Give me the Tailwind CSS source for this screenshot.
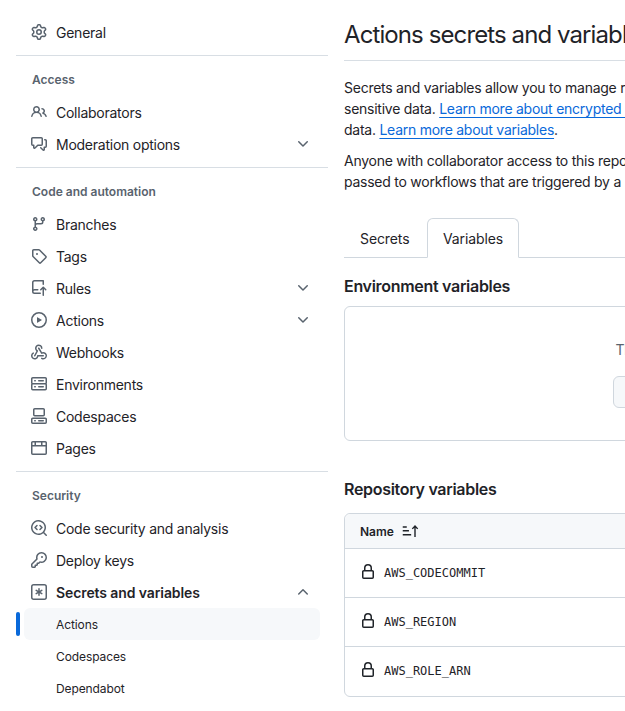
<!DOCTYPE html>
<html>
<head>
    <meta charset="UTF-8">
    <title>Actions secrets and variables</title>
    <script src="https://cdn.jsdelivr.net/npm/@tailwindcss/browser@4"></script>
</head>
<body class="bg-white overflow-hidden font-['Inter','Liberation_Sans',sans-serif] text-[14px] leading-[21px] tracking-[-0.25px] text-[#1f2328]">
<div class="flex w-[1300px] h-[711px] overflow-hidden">

    <!-- sidebar -->
    <nav class="w-[312px] mx-[16px] shrink-0 pt-[16px]">
        <a class="flex items-center h-[32px] pl-[15px]">
            <svg class="w-[16px] h-[16px] mr-[9px] fill-[#59636e]" viewBox="0 0 16 16"><path d="M8 0a8.2 8.2 0 0 1 .701.031C9.444.095 9.99.645 10.16 1.29l.288 1.107c.018.066.079.158.212.224.231.114.454.243.668.386.123.082.233.09.299.071l1.103-.303c.644-.176 1.392.021 1.82.63.27.385.506.792.704 1.218.315.675.111 1.422-.364 1.891l-.814.806c-.049.048-.098.147-.088.294.016.257.016.515 0 .772-.01.147.038.246.088.294l.814.806c.475.469.679 1.216.364 1.891a7.977 7.977 0 0 1-.704 1.217c-.428.61-1.176.807-1.82.63l-1.102-.302c-.067-.019-.177-.011-.3.071a5.909 5.909 0 0 1-.668.386c-.133.066-.194.158-.211.224l-.29 1.106c-.168.646-.715 1.196-1.458 1.26a8.006 8.006 0 0 1-1.402 0c-.743-.064-1.289-.614-1.458-1.26l-.289-1.106c-.018-.066-.079-.158-.212-.224a5.738 5.738 0 0 1-.668-.386c-.123-.082-.233-.09-.299-.071l-1.103.303c-.644.176-1.392-.021-1.82-.63a8.12 8.12 0 0 1-.704-1.218c-.315-.675-.111-1.422.363-1.891l.815-.806c.05-.048.098-.147.088-.294a6.214 6.214 0 0 1 0-.772c.01-.147-.038-.246-.088-.294l-.815-.806C.635 6.045.431 5.298.746 4.623a7.92 7.92 0 0 1 .704-1.217c.428-.61 1.176-.807 1.82-.63l1.102.302c.067.019.177.011.3-.071.214-.143.437-.272.668-.386.133-.066.194-.158.211-.224l.29-1.106C6.009.645 6.556.095 7.299.03 7.53.01 7.764 0 8 0Zm-.571 1.525c-.036.003-.108.036-.137.146l-.289 1.105c-.147.561-.549.967-.998 1.189-.173.086-.34.183-.5.29-.417.278-.97.423-1.529.27l-1.103-.303c-.109-.03-.175.016-.195.045-.22.312-.412.644-.573.99-.014.031-.021.11.059.19l.815.806c.411.406.562.957.53 1.456a4.709 4.709 0 0 0 0 .582c.032.499-.119 1.05-.53 1.456l-.815.806c-.081.08-.073.159-.059.19.162.346.353.677.573.989.02.03.085.076.195.046l1.102-.303c.56-.153 1.113-.008 1.53.27.161.107.328.204.501.29.447.222.85.629.997 1.189l.289 1.105c.029.109.101.143.137.146a6.6 6.6 0 0 0 1.142 0c.036-.003.108-.036.137-.146l.289-1.105c.147-.561.549-.967.998-1.189.173-.086.34-.183.5-.29.417-.278.97-.423 1.529-.27l1.103.303c.109.029.175-.016.195-.045.22-.313.411-.644.573-.99.014-.031.021-.11-.059-.19l-.815-.806c-.411-.406-.562-.957-.53-1.456a4.709 4.709 0 0 0 0-.582c-.032-.499.119-1.05.53-1.456l.815-.806c.081-.08.073-.159.059-.19a6.464 6.464 0 0 0-.573-.989c-.02-.03-.085-.076-.195-.046l-1.102.303c-.56.153-1.113.008-1.53-.27a4.44 4.44 0 0 0-.501-.29c-.447-.222-.85-.629-.997-1.189l-.289-1.105c-.029-.11-.101-.143-.137-.146a6.6 6.6 0 0 0-1.142 0ZM11 8a3 3 0 1 1-6 0 3 3 0 0 1 6 0ZM9.5 8a1.5 1.5 0 1 0-3.001.001A1.5 1.5 0 0 0 9.5 8Z"/></svg>
            General
        </a>
        <div class="h-px bg-[#d8dee4] mt-[7px]"></div>

        <!-- Access -->
        <h3 class="pl-[16px] mt-[13px] h-[21px] text-[12px] font-semibold tracking-normal text-[#59636e] leading-[21px]">Access</h3>
        <div class="mt-[6px]">
            <a class="flex items-center h-[32px] pl-[15px]">
                <svg class="w-[16px] h-[16px] mr-[9px] fill-[#59636e]" viewBox="0 0 16 16"><path d="M2 5.5a3.5 3.5 0 1 1 5.898 2.549 5.508 5.508 0 0 1 3.034 4.084.75.75 0 1 1-1.482.235 4 4 0 0 0-7.9 0 .75.75 0 0 1-1.482-.236A5.507 5.507 0 0 1 3.102 8.05 3.493 3.493 0 0 1 2 5.5ZM11 4a3.001 3.001 0 0 1 2.22 5.018 5.01 5.01 0 0 1 2.56 3.012.749.749 0 0 1-.885.954.752.752 0 0 1-.549-.514 3.507 3.507 0 0 0-2.522-2.372.75.75 0 0 1-.574-.73v-.352a.75.75 0 0 1 .416-.672A1.5 1.5 0 0 0 11 5.5.75.75 0 0 1 11 4Zm-5.5-.5a2 2 0 1 0-.001 3.999A2 2 0 0 0 5.5 3.5Z"/></svg>
                Collaborators
            </a>
            <a class="flex items-center h-[32px] pl-[15px]">
                <svg class="w-[16px] h-[16px] mr-[9px] fill-[#59636e]" viewBox="0 0 16 16"><path d="M1.75 1h8.5c.966 0 1.75.784 1.75 1.75v5.5A1.75 1.75 0 0 1 10.25 10H7.061l-2.574 2.573A1.458 1.458 0 0 1 2 11.543V10h-.25A1.75 1.75 0 0 1 0 8.25v-5.5C0 1.784.784 1 1.75 1ZM1.5 2.75v5.5c0 .138.112.25.25.25h1a.75.75 0 0 1 .75.75v2.19l2.72-2.72a.749.749 0 0 1 .53-.22h3.5a.25.25 0 0 0 .25-.25v-5.5a.25.25 0 0 0-.25-.25h-8.5a.25.25 0 0 0-.25.25Zm13 2a.25.25 0 0 0-.25-.25h-.5a.75.75 0 0 1 0-1.5h.5c.966 0 1.75.784 1.75 1.75v5.5A1.75 1.75 0 0 1 14.25 12H14v1.543a1.458 1.458 0 0 1-2.487 1.03L9.22 12.28a.749.749 0 0 1 .326-1.275.749.749 0 0 1 .734.215l2.22 2.22v-2.19a.75.75 0 0 1 .75-.75h1a.25.25 0 0 0 .25-.25Z"/></svg>
                Moderation options
                <svg class="w-[16px] h-[16px] ml-auto mr-[17px] fill-[#59636e]" viewBox="0 0 16 16"><path d="M12.78 5.22a.749.749 0 0 1 0 1.06l-4.25 4.25a.749.749 0 0 1-1.06 0L3.22 6.28a.749.749 0 1 1 1.06-1.06L8 8.939l3.72-3.719a.749.749 0 0 1 1.06 0Z"/></svg>
            </a>
        </div>
        <div class="h-px bg-[#d8dee4] mt-[7px]"></div>

        <!-- Code and automation -->
        <h3 class="pl-[16px] mt-[13px] h-[21px] text-[12px] font-semibold tracking-normal text-[#59636e] leading-[21px]">Code and automation</h3>
        <div class="mt-[6px]">
            <a class="flex items-center h-[32px] pl-[15px]">
                <svg class="w-[16px] h-[16px] mr-[9px] fill-[#59636e]" viewBox="0 0 16 16"><path d="M9.5 3.25a2.25 2.25 0 1 1 3 2.122V6A2.5 2.5 0 0 1 10 8.5H6a1 1 0 0 0-1 1v1.128a2.251 2.251 0 1 1-1.5 0V5.372a2.25 2.25 0 1 1 1.5 0v1.836A2.493 2.493 0 0 1 6 7h4a1 1 0 0 0 1-1v-.628A2.25 2.25 0 0 1 9.5 3.25Zm-6 0a.75.75 0 1 0 1.5 0 .75.75 0 0 0-1.5 0Zm8.25-.75a.75.75 0 1 0 0 1.5.75.75 0 0 0 0-1.5ZM4.25 12a.75.75 0 1 0 0 1.5.75.75 0 0 0 0-1.5Z"/></svg>
                Branches
            </a>
            <a class="flex items-center h-[32px] pl-[15px]">
                <svg class="w-[16px] h-[16px] mr-[9px] fill-[#59636e]" viewBox="0 0 16 16"><path d="M1 7.775V2.75C1 1.784 1.784 1 2.75 1h5.025c.464 0 .91.184 1.238.513l6.25 6.25a1.75 1.75 0 0 1 0 2.474l-5.026 5.026a1.75 1.75 0 0 1-2.474 0l-6.25-6.25A1.752 1.752 0 0 1 1 7.775Zm1.5 0c0 .066.026.13.073.177l6.25 6.25a.25.25 0 0 0 .354 0l5.025-5.025a.25.25 0 0 0 0-.354l-6.25-6.25a.25.25 0 0 0-.177-.073H2.75a.25.25 0 0 0-.25.25ZM6 5a1 1 0 1 1 0 2 1 1 0 0 1 0-2Z"/></svg>
                Tags
            </a>
            <a class="flex items-center h-[32px] pl-[15px]">
                <svg class="w-[16px] h-[16px] mr-[9px] fill-[#59636e]" viewBox="0 0 16 16"><path d="M1 2.5A2.5 2.5 0 0 1 3.5 0h8.75a.75.75 0 0 1 .75.75v3.5a.75.75 0 0 1-1.5 0V1.5h-8a1 1 0 0 0-1 1v6.708A2.486 2.486 0 0 1 3.5 9h3.25a.75.75 0 0 1 0 1.5H3.5a1 1 0 0 0 0 2h5.75a.75.75 0 0 1 0 1.5H3.5A2.5 2.5 0 0 1 1 11.5Zm13.23 7.79h-.001l-1.224-1.224v6.184a.75.75 0 0 1-1.5 0V9.066L10.28 10.29a.75.75 0 0 1-1.06-1.061l2.505-2.504a.75.75 0 0 1 1.06 0L15.29 9.23a.751.751 0 0 1-.018 1.042.751.751 0 0 1-1.042.018Z"/></svg>
                Rules
                <svg class="w-[16px] h-[16px] ml-auto mr-[17px] fill-[#59636e]" viewBox="0 0 16 16"><path d="M12.78 5.22a.749.749 0 0 1 0 1.06l-4.25 4.25a.749.749 0 0 1-1.06 0L3.22 6.28a.749.749 0 1 1 1.06-1.06L8 8.939l3.72-3.719a.749.749 0 0 1 1.06 0Z"/></svg>
            </a>
            <a class="flex items-center h-[32px] pl-[15px]">
                <svg class="w-[16px] h-[16px] mr-[9px] fill-[#59636e]" viewBox="0 0 16 16"><path d="M8 0a8 8 0 1 1 0 16A8 8 0 0 1 8 0ZM1.5 8a6.5 6.5 0 1 0 13 0 6.5 6.5 0 0 0-13 0Zm4.879-2.773 4.264 2.559a.25.25 0 0 1 0 .428l-4.264 2.559A.25.25 0 0 1 6 10.559V5.442a.25.25 0 0 1 .379-.215Z"/></svg>
                Actions
                <svg class="w-[16px] h-[16px] ml-auto mr-[17px] fill-[#59636e]" viewBox="0 0 16 16"><path d="M12.78 5.22a.749.749 0 0 1 0 1.06l-4.25 4.25a.749.749 0 0 1-1.06 0L3.22 6.28a.749.749 0 1 1 1.06-1.06L8 8.939l3.72-3.719a.749.749 0 0 1 1.06 0Z"/></svg>
            </a>
            <a class="flex items-center h-[32px] pl-[15px]">
                <svg class="w-[16px] h-[16px] mr-[9px] fill-[#59636e]" viewBox="0 0 16 16"><path d="M5.5 4.25a2.25 2.25 0 0 1 4.5 0 .75.75 0 0 0 1.5 0 3.75 3.75 0 1 0-6.14 2.889l-2.272 4.258a.75.75 0 0 0 1.324.706L7 7.25a.75.75 0 0 0-.309-1.015A2.25 2.25 0 0 1 5.5 4.25Z"/><path d="M7.364 3.607a.75.75 0 0 1 1.03.257l2.608 4.349a3.75 3.75 0 1 1-.628 6.785.75.75 0 0 1 .752-1.299 2.25 2.25 0 1 0-.033-3.88.75.75 0 0 1-1.03-.256L7.107 4.636a.75.75 0 0 1 .257-1.03Z"/><path d="M2.9 8.776A.75.75 0 0 1 2.625 9.8 2.25 2.25 0 1 0 6 11.75a.75.75 0 0 1 .75-.751h5.5a.75.75 0 0 1 0 1.5H7.425a3.751 3.751 0 1 1-5.55-3.998.75.75 0 0 1 1.024.274Z"/></svg>
                Webhooks
            </a>
            <a class="flex items-center h-[32px] pl-[15px]">
                <svg class="w-[16px] h-[16px] mr-[9px] fill-[#59636e]" viewBox="0 0 16 16"><path d="M1.75 1h12.5c.966 0 1.75.784 1.75 1.75v4c0 .372-.116.717-.314 1 .198.283.314.628.314 1v4a1.75 1.75 0 0 1-1.75 1.75H1.75A1.75 1.75 0 0 1 0 12.75v-4c0-.358.109-.707.314-1a1.739 1.739 0 0 1-.314-1v-4C0 1.784.784 1 1.75 1ZM1.5 2.75v4c0 .138.112.25.25.25h12.5a.25.25 0 0 0 .25-.25v-4a.25.25 0 0 0-.25-.25H1.75a.25.25 0 0 0-.25.25Zm.25 5.75a.25.25 0 0 0-.25.25v4c0 .138.112.25.25.25h12.5a.25.25 0 0 0 .25-.25v-4a.25.25 0 0 0-.25-.25ZM7 4.75A.75.75 0 0 1 7.75 4h4.5a.75.75 0 0 1 0 1.5h-4.5A.75.75 0 0 1 7 4.75ZM7.75 10h4.5a.75.75 0 0 1 0 1.5h-4.5a.75.75 0 0 1 0-1.5ZM3 4.75A.75.75 0 0 1 3.75 4h.5a.75.75 0 0 1 0 1.5h-.5A.75.75 0 0 1 3 4.75ZM3.75 10h.5a.75.75 0 0 1 0 1.5h-.5a.75.75 0 0 1 0-1.5Z"/></svg>
                Environments
            </a>
            <a class="flex items-center h-[32px] pl-[15px]">
                <svg class="w-[16px] h-[16px] mr-[9px] fill-[#59636e]" viewBox="0 0 16 16"><path d="M0 11.25c0-.966.784-1.75 1.75-1.75h12.5c.966 0 1.75.784 1.75 1.75v3A1.75 1.75 0 0 1 14.25 16H1.75A1.75 1.75 0 0 1 0 14.25Zm2-9.5C2 .784 2.784 0 3.75 0h8.5C13.216 0 14 .784 14 1.75v5a1.75 1.75 0 0 1-1.75 1.75h-8.5A1.75 1.75 0 0 1 2 6.75Zm1.75-.25a.25.25 0 0 0-.25.25v5c0 .138.112.25.25.25h8.5a.25.25 0 0 0 .25-.25v-5a.25.25 0 0 0-.25-.25Zm-2 9.5a.25.25 0 0 0-.25.25v3c0 .138.112.25.25.25h12.5a.25.25 0 0 0 .25-.25v-3a.25.25 0 0 0-.25-.25Z"/><path d="M7 12.75a.75.75 0 0 1 .75-.75h4.5a.75.75 0 0 1 0 1.5h-4.5a.75.75 0 0 1-.75-.75Zm-4 0a.75.75 0 0 1 .75-.75h.5a.75.75 0 0 1 0 1.5h-.5a.75.75 0 0 1-.75-.75Z"/></svg>
                Codespaces
            </a>
            <a class="flex items-center h-[32px] pl-[15px]">
                <svg class="w-[16px] h-[16px] mr-[9px] fill-[#59636e]" viewBox="0 0 16 16"><path d="M0 2.75C0 1.784.784 1 1.75 1h12.5c.966 0 1.75.784 1.75 1.75v10.5A1.75 1.75 0 0 1 14.25 15H1.75A1.75 1.75 0 0 1 0 13.25ZM14.5 6.5h-13v6.75c0 .138.112.25.25.25h12.5a.25.25 0 0 0 .25-.25Zm-13-3.75V5h2V2.5h-1.75a.25.25 0 0 0-.25.25ZM5 5h5V2.5H5Zm6.5 0h3V2.75a.25.25 0 0 0-.25-.25H11.5Z"/></svg>
                Pages
            </a>
        </div>
        <div class="h-px bg-[#d8dee4] mt-[7px]"></div>

        <!-- Security -->
        <h3 class="pl-[16px] mt-[13px] h-[21px] text-[12px] font-semibold tracking-normal text-[#59636e] leading-[21px]">Security</h3>
        <div class="mt-[6px]">
            <a class="flex items-center h-[32px] pl-[15px]">
                <svg class="w-[16px] h-[16px] mr-[9px] fill-[#59636e]" viewBox="0 0 16 16"><path d="M8.47 4.97a.75.75 0 0 0 0 1.06L9.94 7.5 8.47 8.97a.75.75 0 1 0 1.06 1.06l2-2a.75.75 0 0 0 0-1.06l-2-2a.75.75 0 0 0-1.06 0ZM6.53 6.03a.75.75 0 0 0-1.06-1.06l-2 2a.75.75 0 0 0 0 1.06l2 2a.75.75 0 1 0 1.06-1.06L5.06 7.5l1.47-1.47Z"/><path d="M12.246 13.307a7.501 7.501 0 1 1 1.06-1.06l2.474 2.473a.749.749 0 0 1-.326 1.275.749.749 0 0 1-.734-.215ZM1.5 7.5a6.002 6.002 0 0 0 3.608 5.504 6.002 6.002 0 0 0 6.486-1.117.748.748 0 0 1 .292-.293A6 6 0 1 0 1.5 7.5Z"/></svg>
                Code security and analysis
            </a>
            <a class="flex items-center h-[32px] pl-[15px]">
                <svg class="w-[16px] h-[16px] mr-[9px] fill-[#59636e]" viewBox="0 0 16 16"><path d="M10.5 0a5.499 5.499 0 1 1-1.288 10.848l-.932.932a.749.749 0 0 1-.53.22H7v.75a.749.749 0 0 1-.22.53l-.5.5a.749.749 0 0 1-.53.22H5v.75a.749.749 0 0 1-.22.53l-.5.5a.749.749 0 0 1-.53.22h-2A1.75 1.75 0 0 1 0 14.25v-2c0-.199.079-.389.22-.53l4.932-4.932A5.5 5.5 0 0 1 10.5 0Zm-4 5.5c-.001.431.069.86.205 1.269a.75.75 0 0 1-.181.768L1.5 12.56v1.69c0 .138.112.25.25.25h1.69l.06-.06v-1.19a.75.75 0 0 1 .75-.75h1.19l.06-.06v-1.19a.75.75 0 0 1 .75-.75h1.19l1.023-1.025a.75.75 0 0 1 .768-.18A4 4 0 1 0 6.5 5.5ZM11 6a1 1 0 1 1 0-2 1 1 0 0 1 0 2Z"/></svg>
                Deploy keys
            </a>
            <a class="flex items-center h-[32px] pl-[15px] font-semibold tracking-[-0.1px]">
                <svg class="w-[16px] h-[16px] mr-[9px] fill-[#59636e]" viewBox="0 0 16 16"><path d="M0 2.75A2.75 2.75 0 0 1 2.75 0h10.5A2.75 2.75 0 0 1 16 2.75v10.5A2.75 2.75 0 0 1 13.25 16H2.75A2.75 2.75 0 0 1 0 13.25ZM2.75 1.5c-.69 0-1.25.56-1.25 1.25v10.5c0 .69.56 1.25 1.25 1.25h10.5c.69 0 1.25-.56 1.25-1.25V2.75c0-.69-.56-1.25-1.25-1.25Z"/><path d="M8 4a.75.75 0 0 1 .75.75V6.7l1.69-.975a.75.75 0 0 1 .75 1.3L9.5 8l1.69.976a.75.75 0 0 1-.75 1.298L8.75 9.3v1.951a.75.75 0 0 1-1.5 0V9.299l-1.69.976a.75.75 0 0 1-.75-1.3L6.5 8l-1.69-.975a.75.75 0 0 1 .75-1.3l1.69.976V4.75A.75.75 0 0 1 8 4Z"/></svg>
                Secrets and variables
                <svg class="w-[16px] h-[16px] ml-auto mr-[17px] fill-[#59636e]" viewBox="0 0 16 16"><path d="M3.22 10.53a.749.749 0 0 1 0-1.06l4.25-4.25a.749.749 0 0 1 1.06 0l4.25 4.25a.749.749 0 1 1-1.06 1.06L8 6.811 4.28 10.53a.749.749 0 0 1-1.06 0Z"/></svg>
            </a>
            <!-- sub items -->
            <a class="relative flex items-center h-[32px] ml-[8px] mr-[8px] pl-[32px] rounded-[6px] bg-[#f6f8fa] text-[12px] tracking-[-0.1px]">
                <span class="absolute left-[-8px] top-[4px] w-[4px] h-[24px] rounded-[6px] bg-[#0969da]"></span>
                Actions
            </a>
            <a class="flex items-center h-[32px] ml-[8px] mr-[8px] pl-[32px] text-[12px] tracking-[-0.1px]">Codespaces</a>
            <a class="flex items-center h-[32px] ml-[8px] mr-[8px] pl-[32px] text-[12px] tracking-[-0.1px]">Dependabot</a>
        </div>
    </nav>

    <!-- main -->
    <main class="w-[888px] shrink-0">
        <div class="h-[61px] border-b border-[#d8dee4] pt-[17px]">
            <h2 class="text-[24px] leading-[36px] tracking-[-0.9px] whitespace-nowrap">Actions secrets and variables</h2>
        </div>

        <div class="mt-[16px] whitespace-nowrap">
            <p>Secrets and variables allow you to manage reusable configuration data. Secrets are encrypted and are used for</p>
            <p>sensitive data. <a class="text-[#0969da] underline underline-offset-[3px]">Learn more about encrypted secrets</a>. Variables are shown as plain text and are used for non-sensitive</p>
            <p>data. <a class="text-[#0969da] underline underline-offset-[3px]">Learn more about variables</a>.</p>
        </div>
        <div class="mt-[10px] whitespace-nowrap">
            <p>Anyone with collaborator access to this repository can use these secrets and variables for actions. They are not</p>
            <p>passed to workflows that are triggered by a pull request from a fork.</p>
        </div>

        <!-- tabs -->
        <div class="flex mt-[26px] h-[40px] border-b border-[#d0d7de] tracking-[-0.1px]">
            <a class="flex items-center h-[40px] w-[83px] pl-[16px]">Secrets</a>
            <a class="flex items-center justify-center h-[40px] w-[92px] bg-white border border-[#d0d7de] border-b-white rounded-t-[6px]">Variables</a>
        </div>

        <h3 class="mt-[16px] text-[16px] leading-[24px] font-semibold tracking-[-0.3px]">Environment variables</h3>
        <div class="mt-[8px] h-[135px] border border-[#d0d7de] rounded-[6px] flex flex-col items-center pt-[32px]">
            <p class="text-[#59636e] whitespace-nowrap">There are no environment variables for this repository.</p>
            <a class="mt-[16px] w-[350px] h-[32px] flex items-center justify-center border border-[#d0d7de] rounded-[6px] bg-[#f6f8fa] font-medium">Manage environments</a>
        </div>

        <h3 class="mt-[36px] text-[16px] leading-[24px] font-semibold tracking-[-0.3px]">Repository variables</h3>
        <div class="mt-[12px] border border-[#d0d7de] rounded-[6px]">
            <div class="flex items-center h-[35px] pl-[15px] bg-[#f6f8fa] border-b border-[#d0d7de] rounded-t-[6px] text-[12px] tracking-normal font-semibold">
                Name
                <svg class="w-[17px] h-[14px] ml-[8px] fill-[#1f2328]" viewBox="0 0 17 14"><path d="M0.75 2.3h4v1.4h-4ZM0.75 6h6.2v1.4H0.75ZM0.75 10h8.4v1.4H0.75Z"/><path d="M13 1l3.2 3.4-1 .9-1.5-1.6V13h-1.4V3.7l-1.5 1.6-1-.9Z"/></svg>
            </div>
            <div class="flex items-center h-[49px] pl-[15px] border-b border-[#d0d7de] font-['DejaVu_Sans_Mono',monospace] text-[12px] tracking-normal">
                <svg class="w-[16px] h-[16px] mr-[8px] mb-[3px] fill-[#1f2328]" viewBox="0 0 16 16"><path d="M4 4a4 4 0 0 1 8 0v2h.25c.966 0 1.75.784 1.75 1.75v5.5A1.75 1.75 0 0 1 12.25 15h-8.5A1.75 1.75 0 0 1 2 13.25v-5.5C2 6.784 2.784 6 3.75 6H4Zm8.25 3.5h-8.5a.25.25 0 0 0-.25.25v5.5c0 .138.112.25.25.25h8.5a.25.25 0 0 0 .25-.25v-5.5a.25.25 0 0 0-.25-.25ZM10.5 6V4a2.5 2.5 0 1 0-5 0v2Z"/></svg>
                AWS_CODECOMMIT
            </div>
            <div class="flex items-center h-[49px] pl-[15px] border-b border-[#d0d7de] font-['DejaVu_Sans_Mono',monospace] text-[12px] tracking-normal">
                <svg class="w-[16px] h-[16px] mr-[8px] mb-[3px] fill-[#1f2328]" viewBox="0 0 16 16"><path d="M4 4a4 4 0 0 1 8 0v2h.25c.966 0 1.75.784 1.75 1.75v5.5A1.75 1.75 0 0 1 12.25 15h-8.5A1.75 1.75 0 0 1 2 13.25v-5.5C2 6.784 2.784 6 3.75 6H4Zm8.25 3.5h-8.5a.25.25 0 0 0-.25.25v5.5c0 .138.112.25.25.25h8.5a.25.25 0 0 0 .25-.25v-5.5a.25.25 0 0 0-.25-.25ZM10.5 6V4a2.5 2.5 0 1 0-5 0v2Z"/></svg>
                AWS_REGION
            </div>
            <div class="flex items-center h-[49px] pl-[15px] font-['DejaVu_Sans_Mono',monospace] text-[12px] tracking-normal">
                <svg class="w-[16px] h-[16px] mr-[8px] mb-[3px] fill-[#1f2328]" viewBox="0 0 16 16"><path d="M4 4a4 4 0 0 1 8 0v2h.25c.966 0 1.75.784 1.75 1.75v5.5A1.75 1.75 0 0 1 12.25 15h-8.5A1.75 1.75 0 0 1 2 13.25v-5.5C2 6.784 2.784 6 3.75 6H4Zm8.25 3.5h-8.5a.25.25 0 0 0-.25.25v5.5c0 .138.112.25.25.25h8.5a.25.25 0 0 0 .25-.25v-5.5a.25.25 0 0 0-.25-.25ZM10.5 6V4a2.5 2.5 0 1 0-5 0v2Z"/></svg>
                AWS_ROLE_ARN
            </div>
        </div>
    </main>
</div>
</body>
</html>
